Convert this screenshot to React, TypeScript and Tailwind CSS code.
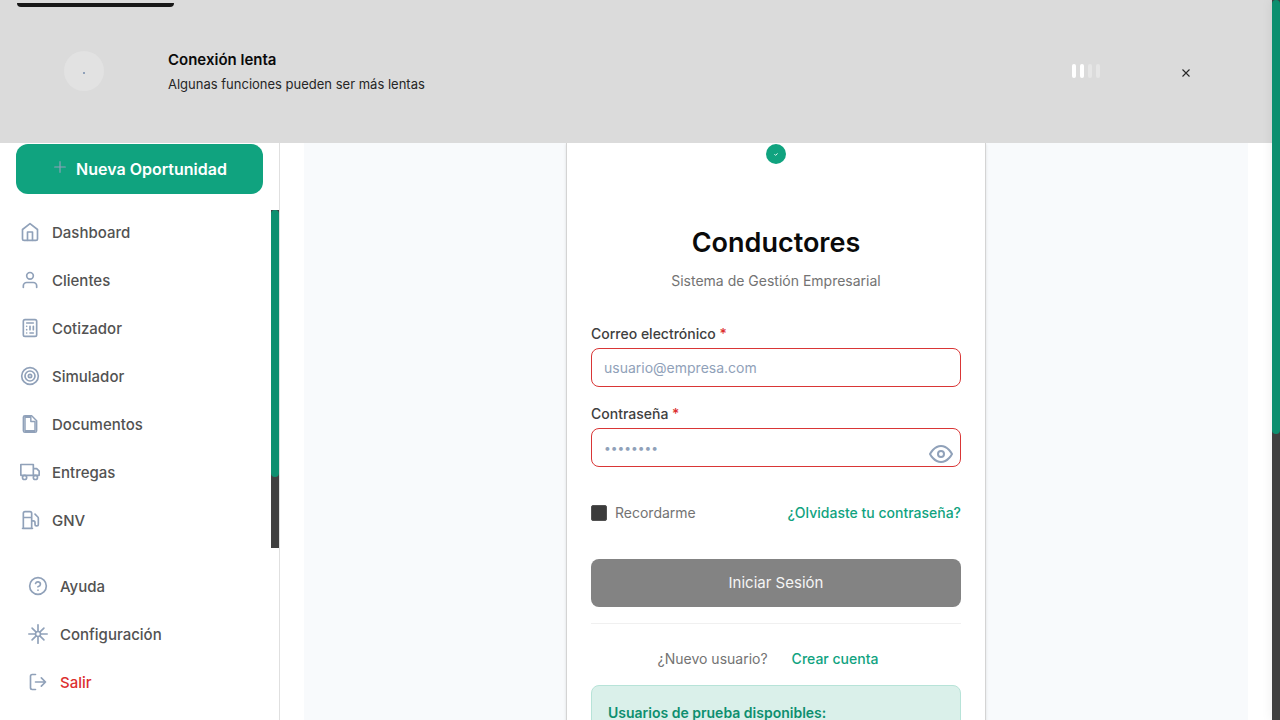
import type { ReactNode } from "react";

function Icon({
  children,
  className = "size-5",
  strokeWidth = 2,
}: {
  children: ReactNode;
  className?: string;
  strokeWidth?: number;
}) {
  return (
    <svg
      viewBox="0 0 24 24"
      fill="none"
      stroke="currentColor"
      strokeWidth={strokeWidth}
      strokeLinecap="round"
      strokeLinejoin="round"
      aria-hidden="true"
      className={`shrink-0 text-slate-400 ${className}`}
    >
      {children}
    </svg>
  );
}

const mainItems: { label: string; icon: ReactNode }[] = [
  {
    label: "Dashboard",
    icon: (
      <>
        <path d="M3 9l9-7 9 7v11a2 2 0 0 1-2 2H5a2 2 0 0 1-2-2z" />
        <path d="M9 22V12h6v10" />
      </>
    ),
  },
  {
    label: "Clientes",
    icon: (
      <>
        <path d="M20 21v-2a4 4 0 0 0-4-4H8a4 4 0 0 0-4 4v2" />
        <circle cx="12" cy="7" r="4" />
      </>
    ),
  },
  {
    label: "Cotizador",
    icon: (
      <>
        <rect x="4" y="2" width="16" height="20" rx="2" />
        <path d="M8 6h8M16 10v4M12 10v4M8 10h.01M8 14h.01M8 18h.01M12 18h4" />
      </>
    ),
  },
  {
    label: "Simulador",
    icon: (
      <>
        <circle cx="12" cy="12" r="10" />
        <circle cx="12" cy="12" r="6" />
        <circle cx="12" cy="12" r="2" />
      </>
    ),
  },
  {
    label: "Documentos",
    icon: (
      <path
        strokeWidth="1.75"
        d="M14 2H6a2 2 0 0 0-2 2v16a2 2 0 0 0 2 2h12a2 2 0 0 0 2-2V8l-6-6M18 20H6V4h7v5h5v11z"
      />
    ),
  },
  {
    label: "Entregas",
    icon: (
      <>
        <path d="M1 3h15v13H1zM16 8h4l3 3v5h-7z" />
        <circle cx="5.5" cy="18.5" r="2.5" />
        <circle cx="18.5" cy="18.5" r="2.5" />
      </>
    ),
  },
  {
    label: "GNV",
    icon: (
      <path d="M3 22h12M4 9h10M14 22V4a2 2 0 0 0-2-2H6a2 2 0 0 0-2 2v18M14 13h2a2 2 0 0 1 2 2v2a2 2 0 0 0 4 0V9.83a2 2 0 0 0-.59-1.42L18 5" />
    ),
  },
];

const footerItems: { label: string; icon: ReactNode; color: string }[] = [
  {
    label: "Ayuda",
    color: "text-[#525252]",
    icon: (
      <>
        <circle cx="12" cy="12" r="10" />
        <path d="M9.09 9a3 3 0 0 1 5.83 1c0 2-3 3-3 3M12 17h.01" />
      </>
    ),
  },
  {
    label: "Configuración",
    color: "text-[#525252]",
    icon: (
      <>
        <circle cx="12" cy="12" r="3" />
        <path d="M12 1v7M12 16v7M1 12h7M16 12h7M4.9 4.9l4.3 4.3M14.8 14.8l4.3 4.3M4.9 19.1l4.3-4.3M14.8 9.2l4.3-4.3" />
      </>
    ),
  },
  {
    label: "Salir",
    color: "text-[#dc2f2f]",
    icon: <path d="M9 21H5a2 2 0 0 1-2-2V5a2 2 0 0 1 2-2h4M16 17l5-5-5-5M21 12H9" />,
  },
];

function Banner() {
  return (
    <div role="status" className="flex h-[143px] shrink-0 items-center gap-16 bg-[#dbdbdb] px-16 pb-0.5">
      <div className="flex size-10 items-center justify-center rounded-full bg-[#e2e2e2]">
        <span className="mt-1 size-0.5 bg-slate-400" />
      </div>
      <div className="flex-1">
        <p className="text-[15px] leading-6 font-semibold text-[#0a0a0a]">Conexión lenta</p>
        <p className="mt-0.5 text-[13px] leading-5 text-[#262626]">Algunas funciones pueden ser más lentas</p>
      </div>
      <div className="flex gap-1">
        <span className="h-3.5 w-1 rounded-xs bg-white" />
        <span className="h-3.5 w-1 rounded-xs bg-white" />
        <span className="h-3.5 w-1 rounded-xs bg-[#e6e6e6]" />
        <span className="h-3.5 w-1 rounded-xs bg-[#e6e6e6]" />
      </div>
      <button type="button" aria-label="Cerrar" className="flex size-11 items-center justify-center pt-1">
        <svg viewBox="0 0 8 8" stroke="#262626" strokeWidth="1.1" className="size-2" aria-hidden="true">
          <path d="M0.5 0.5l7 7M7.5 0.5l-7 7" />
        </svg>
      </button>
    </div>
  );
}

function NavLink({ label, icon, color }: { label: string; icon: ReactNode; color: string }) {
  return (
    <a href="#" className={`flex h-11 items-center gap-3 text-[15px] font-medium ${color}`}>
      <Icon>{icon}</Icon>
      <span className="pt-0.5">{label}</span>
    </a>
  );
}

function Sidebar() {
  return (
    <aside className="flex w-[280px] shrink-0 flex-col border-r border-[#e0e0e0] bg-white pt-px">
      <div className="px-4 pb-4">
        <button
          type="button"
          className="flex h-[50px] w-full items-center justify-center gap-2 rounded-xl bg-[#10a37f] text-base font-semibold text-white"
        >
          <Icon className="mb-1 size-4" strokeWidth={1.75}>
            <path d="M12 4v16M4 12h16" />
          </Icon>
          Nueva Oportunidad
        </button>
      </div>
      <div className="flex">
        <nav className="flex flex-1 flex-col gap-1 pb-1.5 pl-5">
          {mainItems.map((item) => (
            <NavLink key={item.label} label={item.label} icon={item.icon} color="text-[#525252]" />
          ))}
        </nav>
        <div className="w-2 bg-[#404040]">
          <div className="h-[267px] rounded-sm bg-[#0d8f6f]" />
        </div>
      </div>
      <div className="flex flex-col gap-1 pt-4 pl-7">
        {footerItems.map((item) => (
          <NavLink key={item.label} label={item.label} icon={item.icon} color={item.color} />
        ))}
      </div>
    </aside>
  );
}

function LoginCard() {
  return (
    <div className="w-[420px] border-x border-[#d4d4d4] bg-white px-6 pt-px shadow-sm">
      <div className="mx-auto flex size-5 items-center justify-center rounded-full bg-[#10a37f]">
        <svg viewBox="0 0 4 3" fill="none" stroke="white" strokeWidth="0.9" className="h-[3px] w-1" aria-hidden="true">
          <path d="M0.4 1.2l1.1 1.1L3.6 0.5" />
        </svg>
      </div>
      <h1 className="mt-[59px] text-center text-[27px] leading-10 font-semibold text-[#0a0a0a]">Conductores</h1>
      <p className="mt-2 text-center text-sm leading-5 text-[#737373]">Sistema de Gestión Empresarial</p>
      <form className="mt-8">
        <label htmlFor="email" className="block text-sm leading-[22px] font-medium text-[#404040]">
          Correo electrónico <span className="text-[#dc2f2f]">*</span>
        </label>
        <input
          id="email"
          type="email"
          placeholder="usuario@empresa.com"
          className="mt-[3px] block h-[39px] w-full rounded-lg border border-[#d93636] px-3 text-sm placeholder:text-slate-400"
        />
        <label htmlFor="password" className="mt-4 block text-sm leading-[22px] font-medium text-[#404040]">
          Contraseña <span className="text-[#dc2f2f]">*</span>
        </label>
        <div className="relative mt-[3px]">
          <input
            id="password"
            type="password"
            placeholder="••••••••"
            className="block h-[39px] w-full rounded-lg border border-[#d93636] px-3 text-xs placeholder:text-slate-400"
          />
          <button type="button" aria-label="Mostrar contraseña" className="absolute top-3.5 right-2">
            <svg
              viewBox="0 0 24 24"
              fill="none"
              stroke="currentColor"
              strokeWidth="2"
              strokeLinejoin="round"
              aria-hidden="true"
              className="size-6 text-slate-400"
            >
              <path d="M1 12s4-8 11-8 11 8 11 8-4 8-11 8-11-8-11-8z" />
              <circle cx="12" cy="12" r="3" />
            </svg>
          </button>
        </div>
        <div className="mt-9 flex items-center justify-between text-sm leading-5">
          <label className="flex items-center gap-2 text-[#737373]">
            <input
              type="checkbox"
              className="size-4 appearance-none rounded-xs border border-[#525252] bg-[#3b3b3b]"
            />
            Recordarme
          </label>
          <a href="#" className="font-medium text-[#10a37f]">
            ¿Olvidaste tu contraseña?
          </a>
        </div>
        <button type="submit" className="mt-9 block h-12 w-full rounded-lg bg-[#838383] text-[15px] text-[#f5f5f5]">
          Iniciar Sesión
        </button>
      </form>
      <div className="mt-4 flex items-center justify-center gap-6 border-t border-[#f0f0f0] pt-[25px] pr-4 text-sm leading-5">
        <span className="text-[#737373]">¿Nuevo usuario?</span>
        <a href="#" className="font-medium text-[#10a37f]">
          Crear cuenta
        </a>
      </div>
      <div className="mt-4 h-40 rounded-lg border border-[#b7e3d8] bg-[#daf0ea] p-4">
        <p className="text-sm leading-[22px] font-semibold text-[#0d8f6f]">Usuarios de prueba disponibles:</p>
      </div>
    </div>
  );
}

export default function App() {
  return (
    <div className="relative flex h-screen overflow-hidden bg-white font-['Inter',sans-serif]">
      <div className="flex min-w-0 flex-1 flex-col">
        <Banner />
        <div className="flex min-h-0 flex-1">
          <Sidebar />
          <main className="flex min-w-0 flex-1 overflow-hidden px-6">
            <div className="flex flex-1 items-start justify-center bg-slate-50">
              <LoginCard />
            </div>
          </main>
        </div>
      </div>
      <div className="w-2 shrink-0 bg-[#404040] shadow-[0_0_12px_rgba(0,0,0,0.08)]">
        <div className="h-[434px] rounded-sm bg-[#0d8f6f]" />
      </div>
      <div className="absolute top-[3px] left-[17px] h-1 w-[157px] rounded-b-lg bg-[#171717]" />
    </div>
  );
}
